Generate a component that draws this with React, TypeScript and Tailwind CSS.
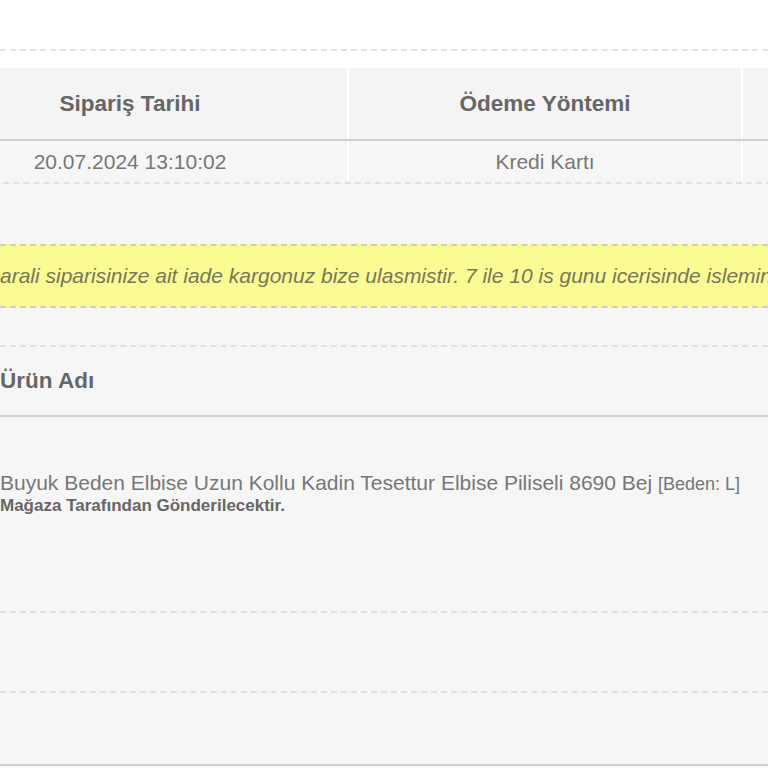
import React from 'react';

// Sipariş detay ekranı: sipariş bilgisi tablosu, iade uyarısı ve ürün listesi.
const order = { date: '20.07.2024 13:10:02', payment: 'Kredi Kartı' };

const App: React.FC = () => {
  return (
    <div className="w-[768px] h-[768px] overflow-hidden bg-[#f6f6f6] font-['Liberation_Sans',Arial,sans-serif]">
      {/* Üst boşluk */}
      <div className="h-[68px] bg-white pt-[49px]">
        <div className="border-t-2 border-dashed border-[#e2e2e2]" />
      </div>

      {/* Sipariş bilgisi tablosu */}
      <div className="overflow-hidden">
        <div className="-ml-[87px] w-[1100px]">
          <div className="grid grid-cols-[436px_394px_270px] h-[73px] bg-[#f4f4f4] border-b-2 border-[#cfcfcf]">
            <div className="flex items-center justify-center border-r-2 border-white text-[22.5px] font-bold text-[#666]">Sipariş Tarihi</div>
            <div className="flex items-center justify-center border-r-2 border-white text-[22.5px] font-bold text-[#666]">Ödeme Yöntemi</div>
            <div />
          </div>
          <div className="grid grid-cols-[436px_394px_270px] h-[43px] border-b-2 border-dashed border-[#e0e0e0]">
            <div className="flex items-center justify-center border-r-2 border-white text-[21px] text-[#777]">{order.date}</div>
            <div className="flex items-center justify-center border-r-2 border-white text-[21px] text-[#777]">{order.payment}</div>
            <div />
          </div>
        </div>
      </div>

      <div className="h-[60px]" />

      {/* İade bilgisi */}
      <div className="h-[64px] bg-[#fbfb93] border-y-2 border-dashed border-[#cfcfb8] flex items-center overflow-hidden">
        <p className="whitespace-nowrap italic text-[21px] text-[#77775a]">
          arali siparisinize ait iade kargonuz bize ulasmistir. 7 ile 10 is gunu icerisinde isleminiz tamamlanacaktir.
        </p>
      </div>

      <div className="h-[37px]" />

      {/* Ürün tablosu */}
      <div className="border-t-2 border-dashed border-[#e0e0e0]">
        <div className="h-[70px] flex items-center border-b-2 border-[#cfcfcf] text-[22.5px] font-bold text-[#666]">
          Ürün Adı
        </div>
        <div className="h-[196px] border-b-2 border-dashed border-[#e0e0e0] pt-[54px]">
          <p className="whitespace-nowrap text-[21px] leading-[24px] text-[#777]">
            Buyuk Beden Elbise Uzun Kollu Kadin Tesettur Elbise Piliseli 8690 Bej{' '}
            <span className="text-[18px]">[Beden: L]</span>
          </p>
          <p className="whitespace-nowrap text-[17px] leading-[20px] font-bold text-[#666]">
            Mağaza Tarafından Gönderilecektir.
          </p>
        </div>
        <div className="h-[80px] border-b-2 border-dashed border-[#e0e0e0]" />
        <div className="h-[73px] border-b-2 border-[#cfcfcf]" />
      </div>
    </div>
  );
};

export default App;
